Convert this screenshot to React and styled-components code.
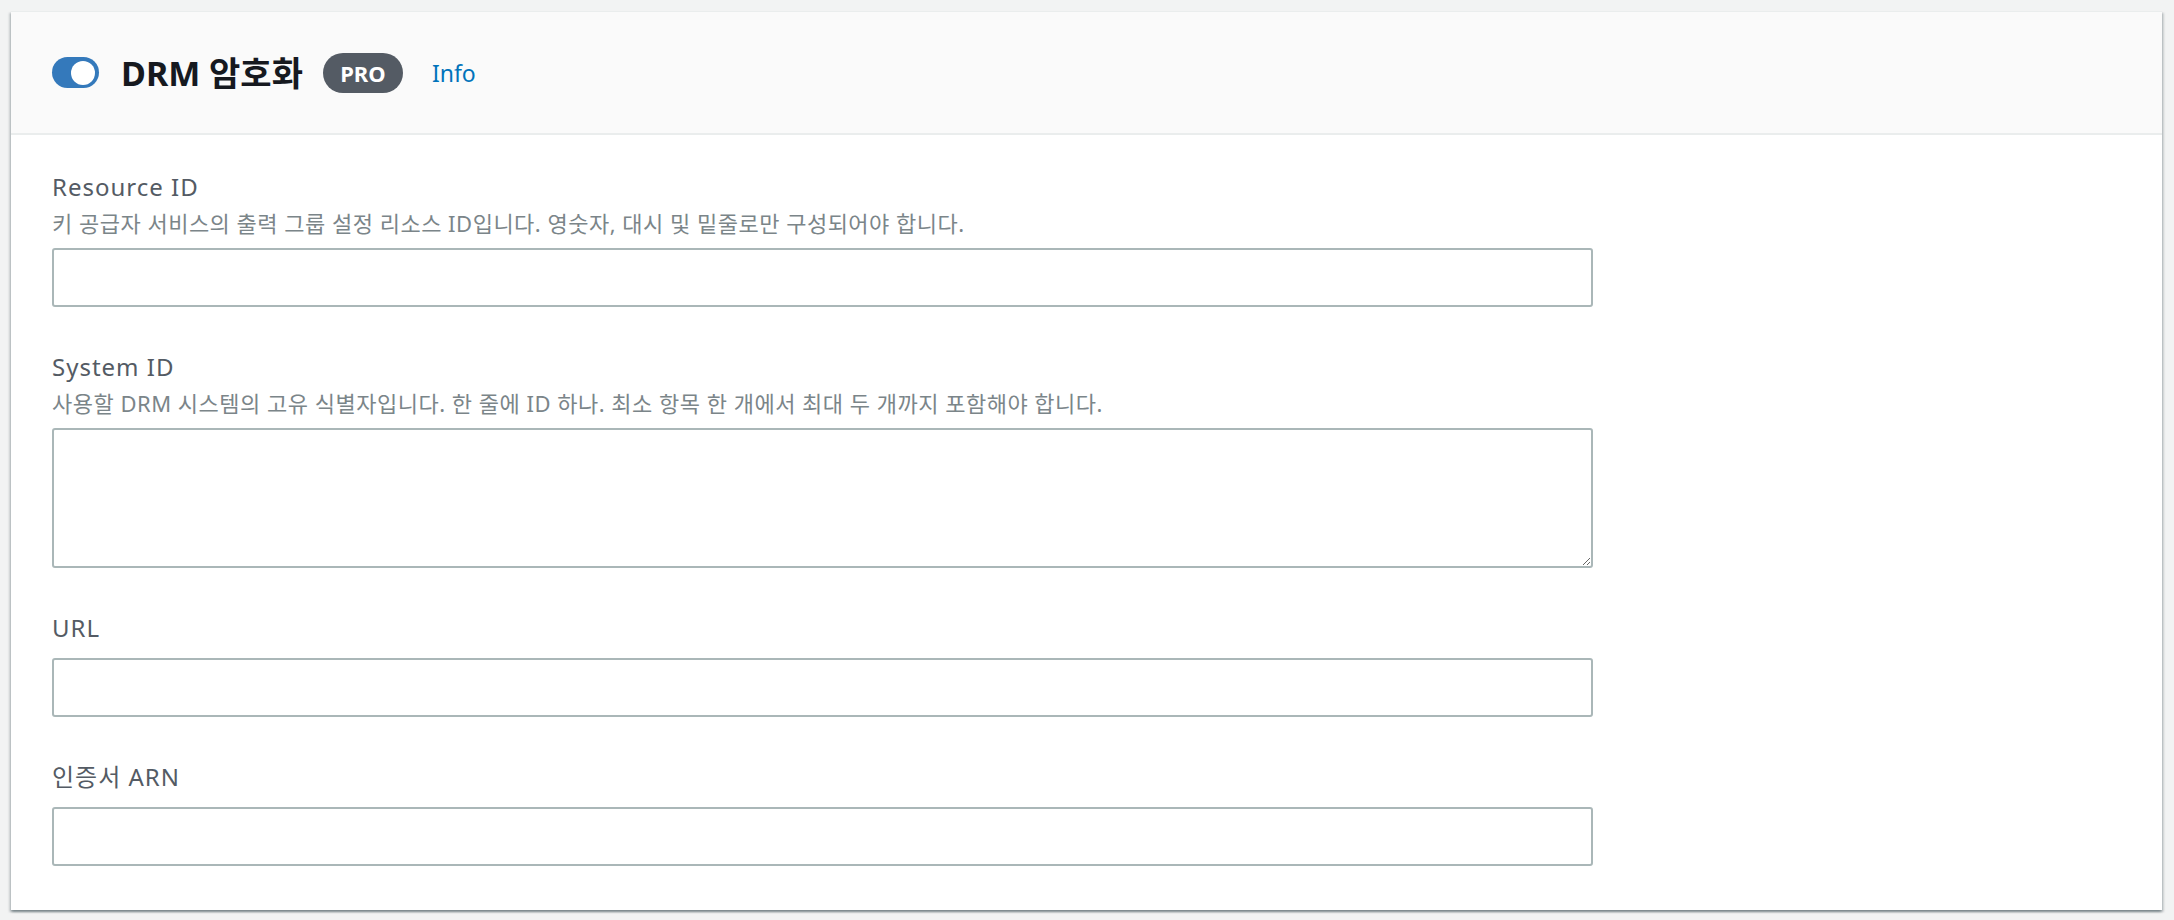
import React, { useState } from 'react';
import styled, { createGlobalStyle } from 'styled-components';

const GlobalStyle = createGlobalStyle`
  html, body {
    margin: 0;
    padding: 0;
    background: #f2f3f3;
  }
  body {
    font-family: "Noto Sans", "Noto Sans CJK KR", sans-serif;
  }
  * {
    box-sizing: border-box;
  }
`;

const fields = [
  {
    id: 'resource',
    label: 'Resource ID',
    description: '키 공급자 서비스의 출력 그룹 설정 리소스 ID입니다. 영숫자, 대시 및 밑줄로만 구성되어야 합니다.',
  },
  {
    id: 'system',
    label: 'System ID',
    description: '사용할 DRM 시스템의 고유 식별자입니다. 한 줄에 ID 하나. 최소 항목 한 개에서 최대 두 개까지 포함해야 합니다.',
    multiline: true,
  },
  { id: 'url', label: 'URL' },
  { id: 'cert', label: '인증서 ARN' },
];

const App = () => {
  const [enabled, setEnabled] = useState(true);

  return (
    <Page>
      <GlobalStyle />
      <Card>
        <Header>
          <Toggle $on={enabled} onClick={() => setEnabled(!enabled)}>
            <Knob />
          </Toggle>
          <Title>DRM 암호화</Title>
          <Badge>PRO</Badge>
          <InfoLink href="#">Info</InfoLink>
        </Header>
        <Body>
          {fields.map((f) => (
            <Field key={f.id}>
              <Label htmlFor={f.id}>{f.label}</Label>
              {f.description && <Description>{f.description}</Description>}
              {f.multiline ? (
                <TextArea id={f.id} $tight={!!f.description} />
              ) : (
                <TextInput id={f.id} type="text" $tight={!!f.description} />
              )}
            </Field>
          ))}
        </Body>
      </Card>
    </Page>
  );
};

export default App;

const Page = styled.div`
  min-height: 920px;
  padding: 11px 12px 12px 11px;
`;

const Card = styled.section`
  background: #ffffff;
  border-top: 1px solid #eaeded;
  box-shadow: 0 2px 2px 0 rgba(0, 28, 36, 0.3), 2px 2px 2px 0 rgba(0, 28, 36, 0.15),
    -2px 2px 2px 0 rgba(0, 28, 36, 0.15);
`;

const Header = styled.div`
  height: 123px;
  display: flex;
  align-items: center;
  padding: 0 41px;
  background: #fafafa;
  border-bottom: 2px solid #eaeded;
`;

const Toggle = styled.div`
  width: 47px;
  height: 31px;
  border-radius: 16px;
  background: ${({ $on }) => ($on ? '#3479bb' : '#aab7b8')};
  display: flex;
  align-items: center;
  justify-content: ${({ $on }) => ($on ? 'flex-end' : 'flex-start')};
  padding: 0 4px;
  cursor: pointer;
  flex-shrink: 0;
`;

const Knob = styled.span`
  width: 24px;
  height: 24px;
  border-radius: 50%;
  background: #ffffff;
`;

const Title = styled.h2`
  margin: 0 0 0 22px;
  font-size: 34px;
  font-weight: 700;
  line-height: 1;
  color: #16191f;
`;

const Badge = styled.span`
  margin-left: 20px;
  width: 80px;
  height: 40px;
  border-radius: 20px;
  background: #545b64;
  color: #ffffff;
  font-size: 22px;
  font-weight: 700;
  display: flex;
  align-items: center;
  justify-content: center;
`;

const InfoLink = styled.a`
  margin-left: 29px;
  font-size: 23px;
  color: #0073bb;
  text-decoration: none;
`;

const Body = styled.div`
  padding: 38px 41px 44px 41px;
  display: flex;
  flex-direction: column;
  gap: 46px;
`;

const Field = styled.div`
  display: flex;
  flex-direction: column;
  max-width: 1541px;
`;

const Label = styled.label`
  font-size: 24px;
  line-height: 28px;
  color: #545b64;
  letter-spacing: 1px;
`;

const Description = styled.div`
  margin-top: 9px;
  font-size: 22px;
  line-height: 26px;
  color: #7b8589;
  letter-spacing: 0.5px;
`;

const TextInput = styled.input`
  margin-top: ${({ $tight }) => ($tight ? '12px' : '16px')};
  width: 100%;
  height: 59px;
  border: 2px solid #aab7b8;
  border-radius: 3px;
  padding: 0 16px;
  font-family: inherit;
  font-size: 22px;
  outline: none;
  background: #ffffff;
`;

const TextArea = styled.textarea`
  margin-top: ${({ $tight }) => ($tight ? '12px' : '16px')};
  width: 100%;
  height: 140px;
  border: 2px solid #aab7b8;
  border-radius: 3px;
  padding: 8px 16px;
  font-family: inherit;
  font-size: 22px;
  outline: none;
  resize: vertical;
  background: #ffffff;
`;
